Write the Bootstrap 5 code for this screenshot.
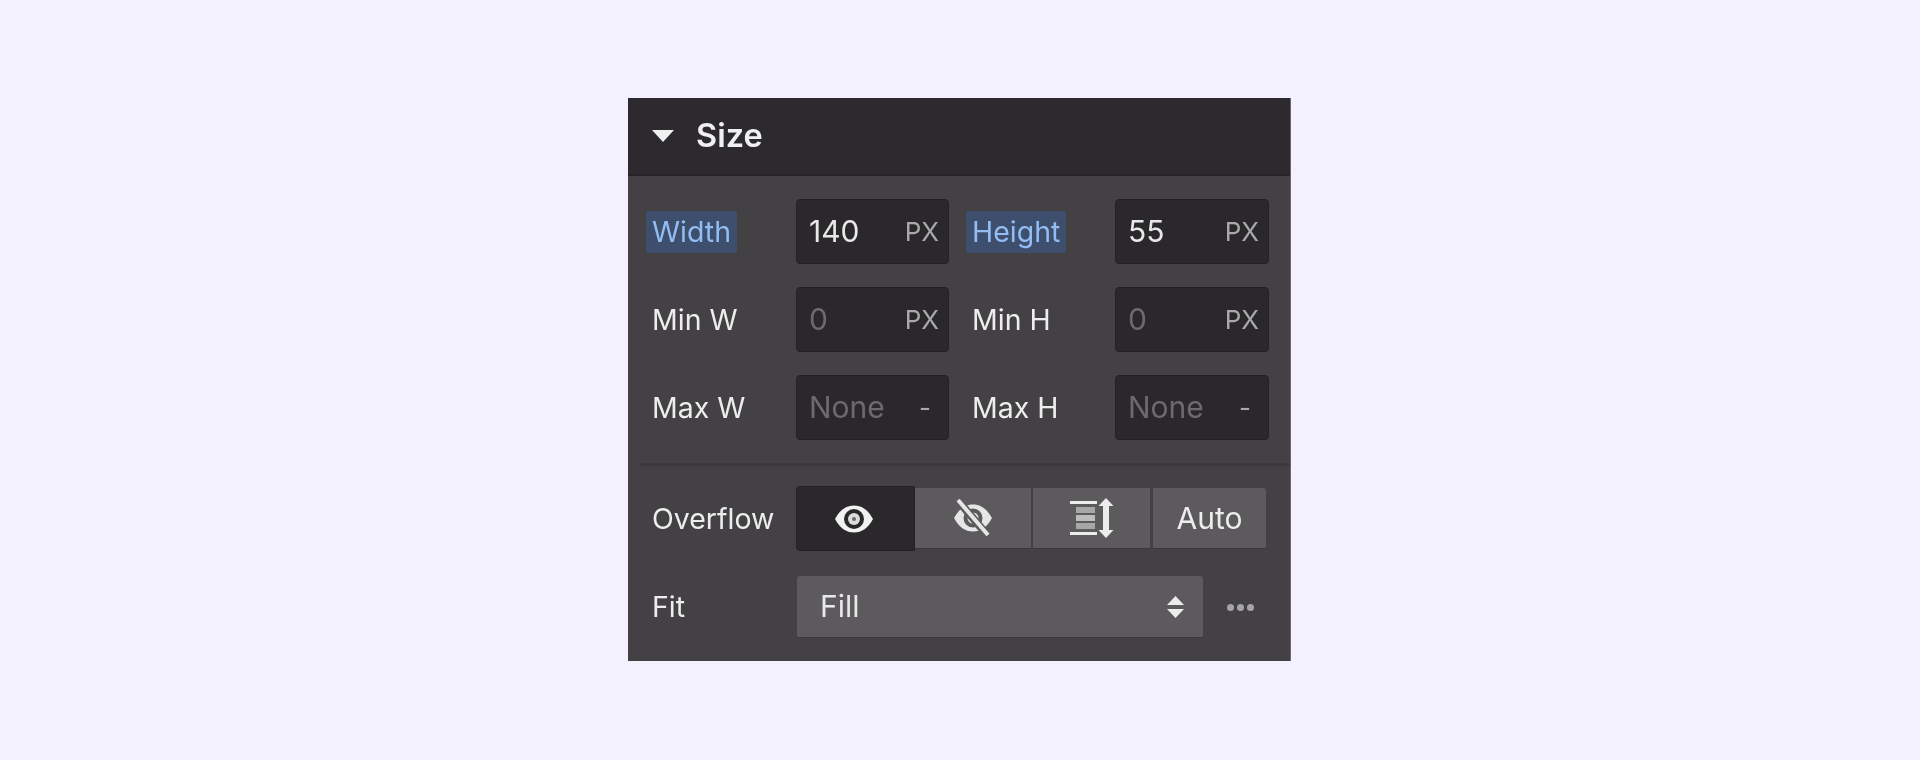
<!DOCTYPE html>
<html lang="en">
<head>
  <meta charset="UTF-8" />
  <meta name="viewport" content="width=device-width, initial-scale=1" />
  <title>Size panel</title>
  <link href="https://cdn.jsdelivr.net/npm/bootstrap@5.3.0/dist/css/bootstrap.min.css" rel="stylesheet">
  <style>
    body {
      background-color: #f3f1fe;
      font-family: "Inter", "Liberation Sans", sans-serif;
      color: #e8e8e8;
    }
    .page-wrap { height: 760px; padding-top: 98px; padding-left: 628px; }
    .size-panel { width: 663px; height: 563px; background: #434144; border-right: 1px solid #6a686c; filter: blur(0.4px); }
    .panel-head { height: 78px; padding-left: 24px; background: #2c2a2e; border-bottom: 2px solid #262427; gap: 22px; }
    .panel-head span { font-size: 32.500px; font-weight: 600; color: #f0f0f0; }
    .panel-body { padding: 23px 21px 0 24px; }
    .dim-grid { display: grid; grid-template-columns: 144px 153px 1fr 154px; row-gap: 23px; column-gap: 0; align-items: center; }
    .dim-grid .second-label { padding-left: 23px; }
    .field-label { font-size: 28.500px; line-height: 34px; color: #ededed; white-space: nowrap; }
    .field-label.set { display: inline-block; background: #3e4f6e; color: #92bcf2; padding: 4px 6px; margin-left: -6px; border-radius: 3px; }
    .dim-box { height: 65px; background: #2a282b; border: 1px solid #232124; border-radius: 4px; padding: 0 9px 0 12px; font-size: 30px; }
    .dim-box .unit { font-size: 26px; color: #a9a9a9; }
    .dim-box .empty { color: #6c6a6d; }
    .panel-rule { height: 3px; background: #3b393c; margin: 23px -21px 20px -12px; }
    .row-label { width: 144px; }
    .seg-wrap { height: 65px; width: 470px; }
    .seg-btn { height: 61px; padding: 0; border: 0; border-radius: 0; background: #5c5a5d; color: #ededed; font-size: 30px; border-bottom: 1px solid #3a383b; }
    .seg-btn.on { height: 65px; width: 119px; padding-right: 3px; background: #2a282b; border: 1px solid #232124; border-radius: 4px 0 0 4px; }
    .seg-a { width: 116px; }
    .seg-b { width: 117px; margin-left: 2px; }
    .seg-c { width: 113px; margin-left: 3px; border-radius: 0 3px 3px 0; }
    .fit-row { margin-top: 25px; }
    .fit-select { width: 406px; height: 62px; margin-left: 1px; padding: 0 19px 0 23px; background: #5c5a5d; border-radius: 3px; border-bottom: 1px solid #3a383b; font-size: 30px; }
    .more-dots { margin-left: 24px; gap: 3px; }
    .more-dots i { display: block; width: 7px; height: 7px; border-radius: 50%; background: #a5a5a5; }
  </style>
</head>
<body>

<div class="page-wrap">
  <div class="size-panel">
    <div class="panel-head d-flex align-items-center">
      <svg width="22" height="12" viewBox="0 0 22 12"><path d="M0 0h22L11 12z" fill="#f0f0f0"/></svg>
      <span>Size</span>
    </div>

    <div class="panel-body">
      <div class="dim-grid">
        <div><span class="field-label set">Width</span></div>
        <div class="dim-box d-flex align-items-center justify-content-between"><span>140</span><span class="unit">PX</span></div>
        <div class="second-label"><span class="field-label set">Height</span></div>
        <div class="dim-box d-flex align-items-center justify-content-between"><span>55</span><span class="unit">PX</span></div>

        <div class="field-label">Min W</div>
        <div class="dim-box d-flex align-items-center justify-content-between"><span class="empty">0</span><span class="unit">PX</span></div>
        <div class="second-label field-label">Min H</div>
        <div class="dim-box d-flex align-items-center justify-content-between"><span class="empty">0</span><span class="unit">PX</span></div>

        <div class="field-label">Max W</div>
        <div class="dim-box d-flex align-items-center justify-content-between"><span class="empty">None</span><span class="unit pe-2">-</span></div>
        <div class="second-label field-label">Max H</div>
        <div class="dim-box d-flex align-items-center justify-content-between"><span class="empty">None</span><span class="unit pe-2">-</span></div>
      </div>

      <div class="panel-rule"></div>

      <div class="d-flex align-items-center">
        <div class="field-label row-label">Overflow</div>
        <div class="seg-wrap d-flex align-items-center">
          <button class="seg-btn on d-flex align-items-center justify-content-center" type="button">
            <svg width="40" height="30" viewBox="0 0 40 30">
              <path fill="#f2f2f2" fill-rule="evenodd" d="M1 15C6 6 12 1.500 20 1.500S34 6 39 15c-5 9-11 13.500-19 13.500S6 24 1 15zM20 5a10 10 0 1 0 0 20 10 10 0 0 0 0-20z"/>
              <circle cx="20" cy="15" r="6" fill="#dcdcdc"/>
              <circle cx="20" cy="15" r="2" fill="#6a686b"/>
            </svg>
          </button>
          <button class="seg-btn seg-a d-flex align-items-center justify-content-center" type="button">
            <svg width="42" height="38" viewBox="0 0 42 38">
              <path fill="#e6e6e6" fill-rule="evenodd" d="M2 19C7 10 13 5.500 21 5.500S35 10 40 19c-5 9-11 13.500-19 13.500S7 28 2 19zM21 9.500a9.500 9.500 0 1 0 0 19 9.500 9.500 0 0 0 0-19z"/>
              <circle cx="21" cy="19" r="5.500" fill="#e6e6e6"/>
              <path d="M4 -1L36 37" stroke="#5c5a5d" stroke-width="8"/>
              <path d="M6 1L36 36" stroke="#e6e6e6" stroke-width="4"/>
            </svg>
          </button>
          <button class="seg-btn seg-b d-flex align-items-center justify-content-center" type="button">
            <svg width="44" height="40" viewBox="0 0 44 40">
              <rect x="0" y="3" width="27" height="3" fill="#ececec"/>
              <rect x="6" y="9" width="19" height="6" fill="#a8a7a8"/>
              <rect x="6" y="17" width="19" height="6" fill="#bdbcbd"/>
              <rect x="6" y="25" width="19" height="6" fill="#a8a7a8"/>
              <rect x="0" y="34" width="27" height="3" fill="#ececec"/>
              <path fill="#ececec" d="M36 0l7.500 8H39v24h4.500L36 40l-7.500-8H33V8h-4.500z"/>
            </svg>
          </button>
          <button class="seg-btn seg-c" type="button">Auto</button>
        </div>
      </div>

      <div class="fit-row d-flex align-items-center">
        <div class="field-label row-label">Fit</div>
        <div class="fit-select d-flex align-items-center justify-content-between">
          <span>Fill</span>
          <svg width="17" height="22" viewBox="0 0 17 22"><path fill="#ececec" d="M8.500 0l8.500 9H0zM0 13h17l-8.500 9z"/></svg>
        </div>
        <div class="more-dots d-flex"><i></i><i></i><i></i></div>
      </div>
    </div>
  </div>
</div>

</body>
</html>
